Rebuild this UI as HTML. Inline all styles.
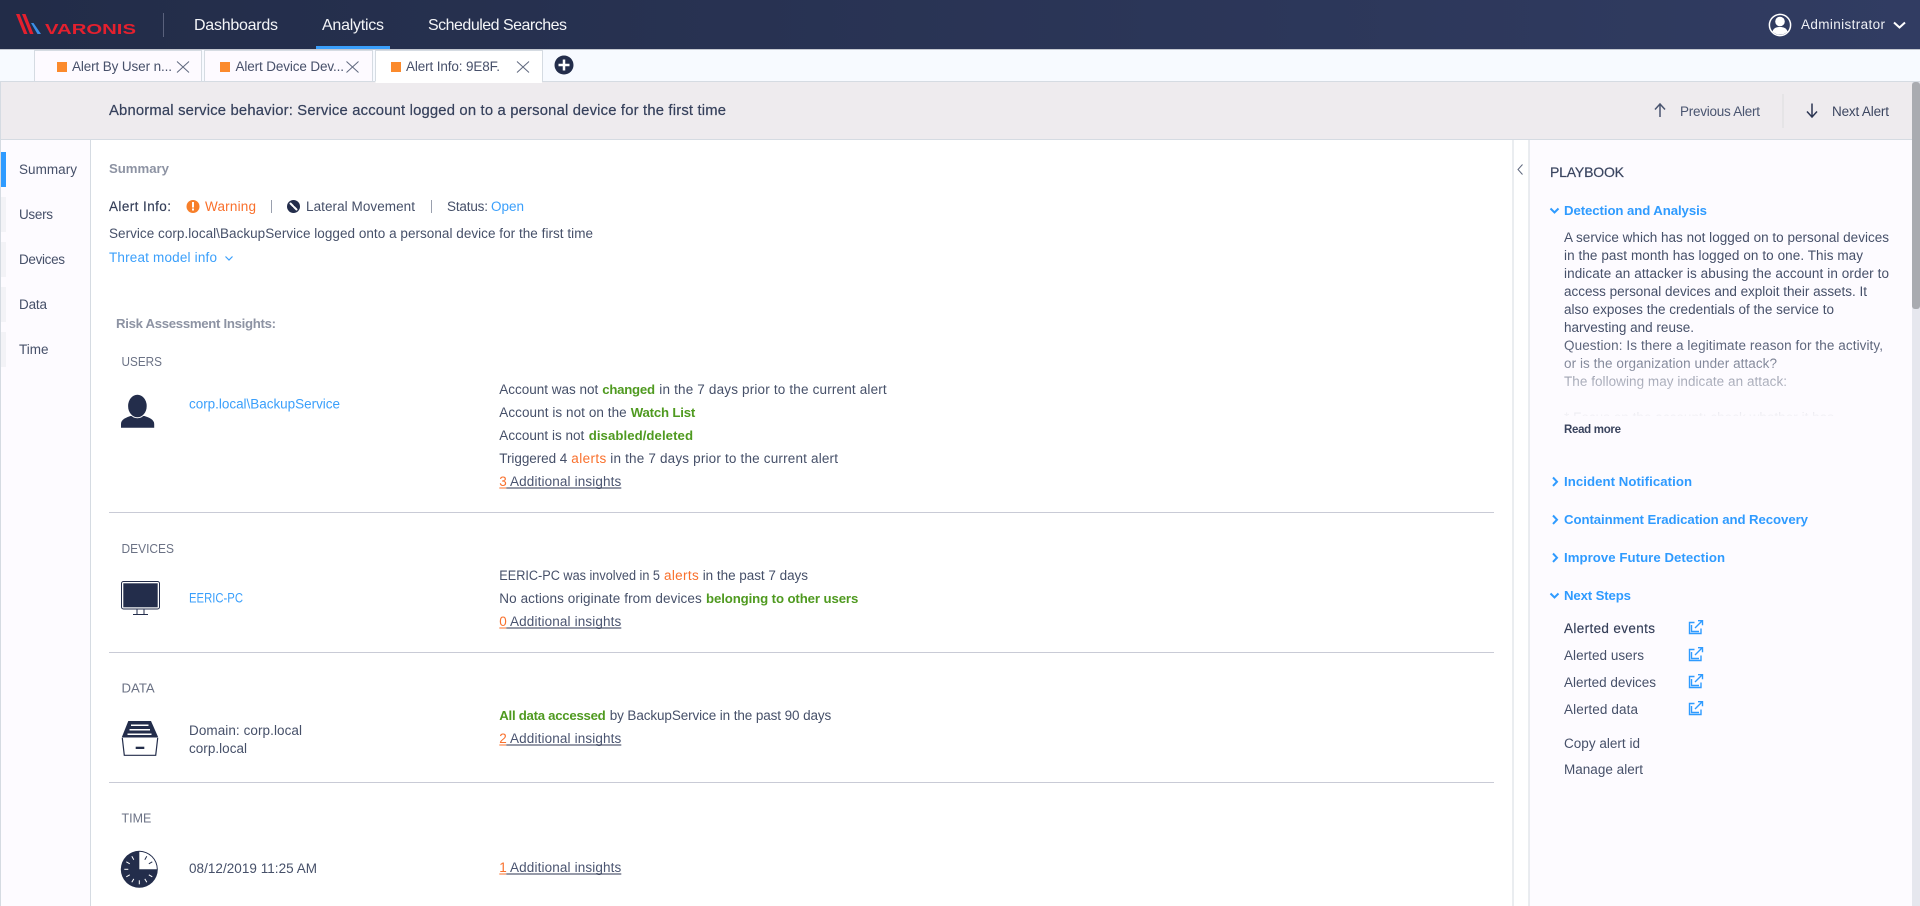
<!DOCTYPE html>
<html lang="en">
<head>
<meta charset="utf-8">
<title>Alert Info</title>
<style>
html,body{margin:0;padding:0;background:#fff;width:1920px;height:906px;overflow:hidden}
svg{display:block}
text{font-family:"Liberation Sans",sans-serif;font-size:13.5px;fill:#465069;white-space:pre}
.nav{font-size:16px;fill:#f4f5f8}
.tab{font-size:13.5px;fill:#47506a}
.b{font-weight:bold}
.g{font-size:13.2px;font-weight:bold;fill:#4f9a20}
.o{fill:#f9702c}
.l{fill:#3a9ffb}
.h{font-size:13.2px;font-weight:bold;fill:#2f9bff}
.gr{font-size:13.2px;font-weight:bold;fill:#8d93a3}
.sec{font-size:13px;fill:#6b7285}
.add{fill:#4a5470}
.d{fill:#333d57}
</style>
</head>
<body>
<svg xmlns="http://www.w3.org/2000/svg" width="1920" height="906" viewBox="0 0 1920 906">
<defs>
<linearGradient id="hd" x1="0" x2="1" y1="0" y2="0"><stop offset="0" stop-color="#222c48"/><stop offset="1" stop-color="#313c62"/></linearGradient>
<linearGradient id="fade" x1="0" x2="0" y1="0" y2="1"><stop offset="0" stop-color="#fdfbff" stop-opacity="0"/><stop offset="1" stop-color="#fdfbff" stop-opacity=".96"/></linearGradient>
</defs>

<!-- base panels -->
<rect width="1920" height="906" fill="#fff"/>
<rect y="139" width="90" height="767" fill="#fdfbff"/>
<rect x="1529" y="139" width="383" height="767" fill="#fdfbff"/>

<!-- header -->
<rect width="1920" height="49" fill="url(#hd)"/>
<rect y="49" width="1920" height="1" fill="#c4c8d0"/>
<polygon points="16,14 19.500,14 27.500,34 24,34" fill="#e4202e"/>
<polygon points="22,14 25.500,14 33.500,34 30,34" fill="#e4202e"/>
<polygon points="31,23 33.500,23 41,34 37.500,34" fill="#3a8fe8"/>
<text x="45" y="34" textLength="91" lengthAdjust="spacingAndGlyphs" style="font-size:15px;fill:#e4202e;font-weight:bold">VARONIS</text>
<rect x="163" y="13" width="1" height="24" fill="#59617c"/>
<text class="nav" x="194" y="30" textLength="84">Dashboards</text>
<text class="nav" x="322" y="30" textLength="62">Analytics</text>
<text class="nav" x="428" y="30" textLength="139">Scheduled Searches</text>
<rect x="316" y="46" width="74" height="3" fill="#3a9ffb"/>
<circle cx="1780" cy="25" r="10.600" fill="none" stroke="#fff" stroke-width="1.500"/>
<circle cx="1780" cy="21.500" r="4.800" fill="#fff"/>
<path d="M1772.500 31.500c1-3.500 4-4.500 7.500-4.500s6.500 1 7.500 4.500a10.500 10.500 0 0 1-15 0z" fill="#fff"/>
<text x="1801" y="29" textLength="84" style="fill:#eef0f5">Administrator</text>
<path d="M1894 22.500l5.500 5 5.500-5" fill="none" stroke="#fff" stroke-width="2"/>

<!-- tab bar -->
<rect y="50" width="1920" height="32" fill="#f7faff"/>
<rect y="81" width="1920" height="1" fill="#d5dbe2"/>
<rect x="34.500" y="50.500" width="167" height="31" fill="#fdfaff" stroke="#d5dbe2"/>
<rect x="204.500" y="50.500" width="168" height="31" fill="#fdfaff" stroke="#d5dbe2"/>
<path d="M375.500 82V50.500H542.500V82" fill="#fff" stroke="#d5dbe2"/>
<rect x="375.500" y="81" width="166.500" height="2" fill="#fff"/>
<rect x="57" y="62" width="10" height="10" fill="#fb8a2c"/>
<rect x="220" y="62" width="10" height="10" fill="#fb8a2c"/>
<rect x="391" y="62" width="10" height="10" fill="#fb8a2c"/>
<text class="tab" x="72" y="71" textLength="100">Alert By User n...</text>
<text class="tab" x="235.500" y="71" textLength="108.500">Alert Device Dev...</text>
<text class="tab" x="406" y="71" textLength="94">Alert Info: 9E8F.</text>
<path d="M177 61.500l12 11M189 61.500l-12 11M346.500 61.500l12 11M358.500 61.500l-12 11M517 61.500l12 11M529 61.500l-12 11" stroke="#5f687e" stroke-width="1" fill="none"/>
<circle cx="564" cy="65" r="9.500" fill="#232d4b"/>
<path d="M564 59.500v11M558.500 65h11" stroke="#fff" stroke-width="2.500"/>

<!-- alert title bar -->
<rect y="82" width="1912" height="57" fill="#eeebee"/>
<rect x="375.500" y="82" width="166.500" height="1" fill="#fff"/>
<rect y="139" width="1912" height="1" fill="#d5dbe2"/>
<text x="109" y="115" textLength="617" style="font-size:14.800px;fill:#36415c;stroke:#36415c;stroke-width:.2">Abnormal service behavior: Service account logged on to a personal device for the first time</text>
<path d="M1660 117V104.500M1655 109.500l5-5.500 5 5.500" fill="none" stroke="#4a5570" stroke-width="1.500"/>
<text x="1680" y="116" textLength="80" style="fill:#4a5570">Previous Alert</text>
<rect x="1782.500" y="94" width="1" height="34" fill="#dcdcdf"/>
<path d="M1812 103.500V116.500M1807 111.500l5 5.500 5-5.500" fill="none" stroke="#2b3552" stroke-width="1.500"/>
<text x="1832" y="116" textLength="57" style="fill:#3c4660">Next Alert</text>

<!-- scrollbar -->
<rect x="1912" y="82" width="8" height="824" fill="#e6e7ee"/>
<rect x="1912" y="82" width="8" height="227" rx="3" fill="#a9abb0"/>

<!-- left nav -->
<rect y="82" width="1" height="824" fill="#d5dbe2"/>
<rect x="90" y="139" width="1" height="767" fill="#d5dbe2"/>
<rect x="1" y="152" width="5" height="35" fill="#2f9bff"/>
<rect x="1" y="197" width="5" height="35" fill="#f3f3f7"/>
<rect x="1" y="242" width="5" height="35" fill="#f3f3f7"/>
<rect x="1" y="287" width="5" height="35" fill="#f3f3f7"/>
<rect x="1" y="332" width="5" height="35" fill="#f3f3f7"/>
<text x="19" y="174" textLength="58">Summary</text>
<text x="19" y="219" textLength="34">Users</text>
<text x="19" y="264" textLength="46">Devices</text>
<text x="19" y="309" textLength="28">Data</text>
<text x="19" y="354" textLength="29.500">Time</text>

<!-- summary -->
<text class="gr" x="109" y="173" textLength="60">Summary</text>
<text class="d" x="109" y="211" textLength="62" style="stroke:#333d57;stroke-width:.15">Alert Info:</text>
<circle cx="193" cy="206.500" r="6.500" fill="#f77f2a"/>
<rect x="192" y="202" width="2" height="5.500" fill="#fff"/>
<rect x="192" y="208.500" width="2" height="2" fill="#fff"/>
<text class="o" x="205" y="211" textLength="51">Warning</text>
<rect x="271" y="200" width="1" height="13" fill="#9aa0ae"/>
<circle cx="293.500" cy="206.500" r="6.500" fill="#232d4b"/>
<path d="M290.500 203.500l2.500 2.500M294 207l2.500 2.500" stroke="#fff" stroke-width="2" stroke-linecap="round"/>
<text x="306" y="211" textLength="109">Lateral Movement</text>
<rect x="431" y="200" width="1" height="13" fill="#9aa0ae"/>
<text x="447" y="211" textLength="41">Status:</text>
<text class="l" x="491" y="211" textLength="33">Open</text>
<text x="109" y="238" textLength="484">Service corp.local\BackupService logged onto a personal device for the first time</text>
<text class="l" x="109" y="262" textLength="108">Threat model info</text>
<path d="M225.500 256.500l3.500 3.500 3.500-3.500" fill="none" stroke="#3a9ffb" stroke-width="1.200"/>
<text class="gr" x="116" y="328" textLength="160">Risk Assessment Insights:</text>

<!-- users -->
<text class="sec" x="121.500" y="366" textLength="40.500" lengthAdjust="spacingAndGlyphs">USERS</text>
<path d="M121 427.700v-3.700c0-4.500 5-6.500 9.500-8h14c4.500 1.500 9.700 3.500 9.700 8v3.700z" fill="#232d4b"/>
<ellipse cx="137.400" cy="406" rx="9.800" ry="11.800" fill="#232d4b" stroke="#fff" stroke-width="1"/>
<text class="l" x="189" y="408.700" textLength="151">corp.local\BackupService</text>
<text x="499.300" y="394" textLength="99">Account was not</text>
<text class="g" x="602.300" y="394" textLength="52.700">changed</text>
<text x="659.300" y="394" textLength="227.400">in the 7 days prior to the current alert</text>
<text x="499.300" y="417" textLength="127.400">Account is not on the</text>
<text class="g" x="630.700" y="417" textLength="64.600">Watch List</text>
<text x="499.300" y="440" textLength="85">Account is not</text>
<text class="g" x="588.700" y="440" textLength="104.300">disabled/deleted</text>
<text x="499.300" y="463" textLength="68">Triggered 4</text>
<text class="o" x="571.300" y="463" textLength="35">alerts</text>
<text x="610.300" y="463" textLength="227.700">in the 7 days prior to the current alert</text>
<text class="o" x="499.300" y="486" textLength="7">3</text>
<text class="add" x="510" y="486" textLength="111.300">Additional insights</text>
<rect x="499.300" y="487.500" width="7" height="1" fill="#f9702c"/>
<rect x="506.300" y="487.500" width="115" height="1" fill="#2c3650"/>
<rect x="109" y="512" width="1385" height="1" fill="#c9cbd6"/>

<!-- devices -->
<text class="sec" x="121.500" y="553" textLength="52.500" lengthAdjust="spacingAndGlyphs">DEVICES</text>
<rect x="121.500" y="581.500" width="38" height="27.500" rx="2" fill="#fff" stroke="#232d4b"/>
<rect x="123.300" y="583.300" width="34.400" height="24" fill="#232d4b"/>
<path d="M137 609v5M144 609v5M133 614.500h15" stroke="#232d4b" fill="none"/>
<text class="l" x="189" y="602.700" textLength="54" lengthAdjust="spacingAndGlyphs" style="font-size:13.500px">EERIC-PC</text>
<text x="499.300" y="580" textLength="160.700" lengthAdjust="spacingAndGlyphs">EERIC-PC was involved in 5</text>
<text class="o" x="664" y="580" textLength="34.700">alerts</text>
<text x="702.700" y="580" textLength="105.300">in the past 7 days</text>
<text x="499.300" y="603" textLength="202.400">No actions originate from devices</text>
<text class="g" x="706" y="603" textLength="152.300">belonging to other users</text>
<text class="o" x="499.300" y="626" textLength="7">0</text>
<text class="add" x="510" y="626" textLength="111.300">Additional insights</text>
<rect x="499.300" y="627.500" width="7" height="1" fill="#f9702c"/>
<rect x="506.300" y="627.500" width="115" height="1" fill="#2c3650"/>
<rect x="109" y="652" width="1385" height="1" fill="#c9cbd6"/>

<!-- data -->
<text class="sec" x="121.500" y="692.700" textLength="33.200" lengthAdjust="spacingAndGlyphs">DATA</text>
<polygon points="128.300,721 151,721 158.300,737.500 121.700,737.500" fill="#232d4b"/>
<path d="M131 725.300h17.500M129.500 729.800h20.500M127.500 734.300h24" stroke="#fff" stroke-width="1.500"/>
<path d="M122.300 738l2 17.300h31.400l2-17.300" fill="#fff" stroke="#232d4b" stroke-width="1.200"/>
<rect x="135.700" y="746.700" width="8.600" height="2.300" fill="#232d4b"/>
<text x="189" y="735" textLength="113">Domain: corp.local</text>
<text x="189" y="753" textLength="58">corp.local</text>
<text class="g" x="499.300" y="720" textLength="106.400">All data accessed</text>
<text x="609.700" y="720" textLength="221.600">by BackupService in the past 90 days</text>
<text class="o" x="499.300" y="743" textLength="7">2</text>
<text class="add" x="510" y="743" textLength="111.300">Additional insights</text>
<rect x="499.300" y="744.500" width="7" height="1" fill="#f9702c"/>
<rect x="506.300" y="744.500" width="115" height="1" fill="#2c3650"/>
<rect x="109" y="782" width="1385" height="1" fill="#c9cbd6"/>

<!-- time -->
<text class="sec" x="121.500" y="822.700" textLength="29.800" lengthAdjust="spacingAndGlyphs">TIME</text>
<g transform="translate(139.300 869.300)">
<circle r="18.500" fill="#232d4b"/>
<path d="M0 0V-17.500A17.500 17.500 0 0 1 17.500 0z" fill="#fff"/>
<g stroke="#232d4b" stroke-width="1">
<path d="M0-15V-11" transform="rotate(30)"/>
<path d="M0-15V-11" transform="rotate(60)"/>
</g>
<g stroke="#fff" stroke-width="1">
<path d="M0-15V-11" transform="rotate(120)"/>
<path d="M0-15V-11" transform="rotate(150)"/>
<path d="M0-15V-11" transform="rotate(180)"/>
<path d="M0-15V-11" transform="rotate(210)"/>
<path d="M0-15V-11" transform="rotate(240)"/>
<path d="M0-15V-11" transform="rotate(270)"/>
<path d="M0-15V-11" transform="rotate(300)"/>
<path d="M0-15V-11" transform="rotate(330)"/>
</g>
</g>
<text x="189" y="873" textLength="128">08/12/2019 11:25 AM</text>
<text class="o" x="499.300" y="872" textLength="7">1</text>
<text class="add" x="510" y="872" textLength="111.300">Additional insights</text>
<rect x="499.300" y="873.500" width="7" height="1" fill="#f9702c"/>
<rect x="506.300" y="873.500" width="115" height="1" fill="#2c3650"/>

<!-- playbook panel -->
<rect x="1512.500" y="139" width="1" height="767" fill="#d5dbe2"/>
<rect x="1528.500" y="139" width="1" height="767" fill="#d5dbe2"/>
<path d="M1522.500 164.500l-4.500 5 4.500 5" fill="none" stroke="#5f687e" stroke-width="1"/>
<text x="1550" y="177" textLength="74" style="font-size:14px;fill:#3a4560;stroke:#3a4560;stroke-width:.2">PLAYBOOK</text>

<path d="M1550.500 208.500l4 4 4-4" fill="none" stroke="#2f9bff" stroke-width="2"/>
<text class="h" x="1564" y="215" textLength="143">Detection and Analysis</text>

<text x="1564" y="242" textLength="325">A service which has not logged on to personal devices</text>
<text x="1564" y="260" textLength="299">in the past month has logged on to one. This may</text>
<text x="1564" y="278" textLength="325">indicate an attacker is abusing the account in order to</text>
<text x="1564" y="296" textLength="303">access personal devices and exploit their assets. It</text>
<text x="1564" y="314" textLength="270">also exposes the credentials of the service to</text>
<text x="1564" y="332" textLength="130">harvesting and reuse.</text>
<text x="1564" y="350" textLength="319">Question: Is there a legitimate reason for the activity,</text>
<text x="1564" y="368" textLength="213">or is the organization under attack?</text>
<text x="1564" y="386" textLength="223">The following may indicate an attack:</text>
<text x="1564" y="422" textLength="270">* Focus on the account: check whether it has</text>
<rect x="1560" y="335" width="345" height="82" fill="url(#fade)"/>
<rect x="1560" y="416" width="345" height="12" fill="#fdfbff"/>
<text x="1564" y="433" textLength="57" style="font-size:11.500px;font-weight:bold;fill:#3a445e">Read more</text>

<path d="M1553 477.500l4 4.200-4 4.200M1553 515.500l4 4.200-4 4.200M1553 553.500l4 4.200-4 4.200" fill="none" stroke="#2f9bff" stroke-width="2"/>
<text class="h" x="1564" y="486" textLength="128">Incident Notification</text>
<text class="h" x="1564" y="524" textLength="244">Containment Eradication and Recovery</text>
<text class="h" x="1564" y="562" textLength="161">Improve Future Detection</text>
<path d="M1550.500 593.500l4 4 4-4" fill="none" stroke="#2f9bff" stroke-width="2"/>
<text class="h" x="1564" y="600" textLength="67">Next Steps</text>

<text class="d" x="1564" y="633" textLength="91" style="stroke:#333d57;stroke-width:.15">Alerted events</text>
<text x="1564" y="660" textLength="80">Alerted users</text>
<text x="1564" y="687" textLength="92">Alerted devices</text>
<text x="1564" y="714" textLength="74">Alerted data</text>
<text x="1564" y="748" textLength="76">Copy alert id</text>
<text x="1564" y="774" textLength="79">Manage alert</text>

<g fill="none" stroke="#2f9bff" stroke-width="1.400">
<path d="M1694.500 622.500h-5v11h11.500v-5M1691.500 625v6.500h7.500M1695 628l7-7M1698 620.700h4.500v4.500"/>
<path d="M1694.500 649.500h-5v11h11.500v-5M1691.500 652v6.500h7.500M1695 655l7-7M1698 647.700h4.500v4.500"/>
<path d="M1694.500 676.500h-5v11h11.500v-5M1691.500 679v6.500h7.500M1695 682l7-7M1698 674.700h4.500v4.500"/>
<path d="M1694.500 703.500h-5v11h11.500v-5M1691.500 706v6.500h7.500M1695 709l7-7M1698 701.700h4.500v4.500"/>
</g>
</svg>
</body>
</html>
